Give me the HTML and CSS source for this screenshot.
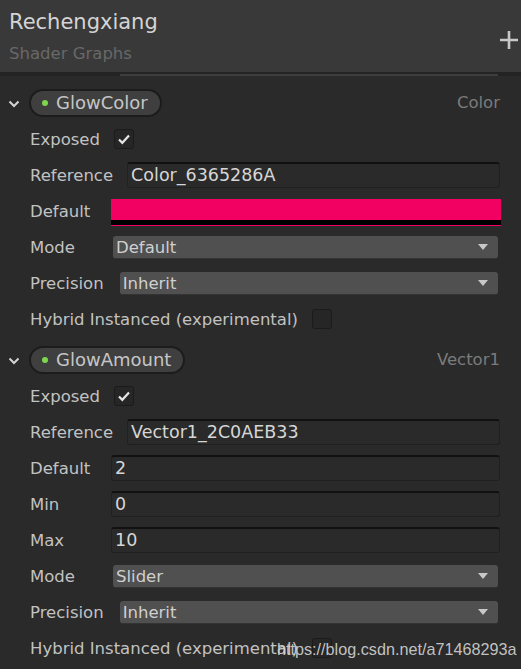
FILE: index.html
```html
<!DOCTYPE html>
<html>
<head>
<meta charset="utf-8">
<link rel="stylesheet" href="styles.css">
</head>
<body>
<div class="panel">
  <header class="head">
    <div class="titles">
      <div class="title">Rechengxiang</div>
      <div class="subtitle">Shader Graphs</div>
    </div>
    <svg class="plus" width="18" height="18" viewBox="0 0 18 18"><path d="M9 0V18M0 9H18" stroke="#c9c9c9" stroke-width="2.6"/></svg>
  </header>
  <div class="scrollbar"><div class="scroll-line"></div></div>

  <div class="content">
    <section class="section">
      <div class="sec-head">
        <svg class="chev" width="12" height="8" viewBox="0 0 12 8"><path d="M1.5 1.5L6 6L10.5 1.5" fill="none" stroke="#d4d4d4" stroke-width="2"/></svg>
        <div class="pill"><span class="dot"></span>GlowColor</div>
        <div class="type">Color</div>
      </div>
      <div class="row"><div class="label">Exposed</div><div class="check"><svg width="14" height="12" viewBox="0 0 14 12"><path d="M2 6.5L5.3 9.8L12 2.5" fill="none" stroke="#e6e6e6" stroke-width="2.2"/></svg></div></div>
      <div class="row"><div class="label">Reference</div><div class="field">Color_6365286A</div></div>
      <div class="row"><div class="label">Default</div><div class="swatch"><div class="swatch-color"></div><div class="swatch-alpha"></div></div></div>
      <div class="row"><div class="label">Mode</div><div class="drop">Default<span class="arrow"></span></div></div>
      <div class="row"><div class="label">Precision</div><div class="drop">Inherit<span class="arrow"></span></div></div>
      <div class="row"><div class="label">Hybrid Instanced (experimental)</div><div class="check"></div></div>
    </section>

    <section class="section second">
      <div class="sec-head">
        <svg class="chev" width="12" height="8" viewBox="0 0 12 8"><path d="M1.5 1.5L6 6L10.5 1.5" fill="none" stroke="#d4d4d4" stroke-width="2"/></svg>
        <div class="pill"><span class="dot"></span>GlowAmount</div>
        <div class="type">Vector1</div>
      </div>
      <div class="row"><div class="label">Exposed</div><div class="check"><svg width="14" height="12" viewBox="0 0 14 12"><path d="M2 6.5L5.3 9.8L12 2.5" fill="none" stroke="#e6e6e6" stroke-width="2.2"/></svg></div></div>
      <div class="row"><div class="label">Reference</div><div class="field">Vector1_2C0AEB33</div></div>
      <div class="row"><div class="label">Default</div><div class="field">2</div></div>
      <div class="row"><div class="label">Min</div><div class="field">0</div></div>
      <div class="row"><div class="label">Max</div><div class="field">10</div></div>
      <div class="row"><div class="label">Mode</div><div class="drop">Slider<span class="arrow"></span></div></div>
      <div class="row"><div class="label">Precision</div><div class="drop">Inherit<span class="arrow"></span></div></div>
      <div class="row"><div class="label">Hybrid Instanced (experimental)</div><div class="check"></div></div>
    </section>
  </div>
  <div class="watermark">https://blog.csdn.net/a71468293a</div>
</div>
</body>
</html>
```

FILE: styles.css
```css
* { box-sizing: border-box; }
html, body { margin: 0; padding: 0; }
body {
  background: #2a2a2a;
  font-family: "DejaVu Sans", Verdana, sans-serif;
  color: #c4c4c4;
  width: 521px;
  height: 669px;
  overflow: hidden;
}
.panel { position: relative; height: 669px; }
.head {
  height: 72px;
  background: #393939;
  display: flex;
  justify-content: space-between;
  padding: 9px 3px 0 9px;
}
.title { font-size: 21px; line-height: 26px; color: #d4d4d4; }
.subtitle { font-size: 16.5px; line-height: 20px; color: #686868; margin-top: 9px; }
.plus { margin-top: 22px; }
.scrollbar { height: 4px; background: #232323; padding-left: 120px; padding-top: 2px; }
.scroll-line { width: 378px; height: 2px; background: #3e3e3e; }
.content { padding-top: 8px; }
.section.second { margin-top: 4px; }
.sec-head {
  height: 37px;
  display: flex;
  align-items: center;
  padding: 0 21px 0 8px;
}
.chev { margin-right: 9px; margin-top: 2px; }
.pill {
  height: 28px;
  border-radius: 14px;
  background: #3f3f3f;
  border: 2px solid #1c1c1c;
  display: flex;
  align-items: center;
  padding: 0 12px 0 11px;
  font-size: 18px;
  color: #c6c6c6;
}
.dot {
  width: 6px; height: 6px;
  border-radius: 50%;
  background: #7fd64c;
  margin-right: 8px;
}
.type { margin-left: auto; font-size: 16.5px; color: #7b7b7b; }
.row {
  height: 36px;
  display: flex;
  align-items: center;
  padding: 0 21px 0 30px;
}
.label {
  min-width: 81px;
  padding-right: 14px;
  font-size: 16.5px;
  color: #c2c2c2;
  white-space: nowrap;
}
.check {
  width: 20px; height: 20px;
  border-radius: 3px;
  background: #262626;
  border: 1px solid #1b1b1b;
  display: flex;
  align-items: center;
  justify-content: center;
}
.field {
  flex: 1;
  height: 26px;
  border-radius: 3px;
  background: #2a2a2a;
  border: 1px solid #202020;
  border-top: 2px solid #111;
  padding-left: 3px;
  font-size: 17.5px;
  line-height: 22px;
  color: #d6d6d6;
}
.swatch { flex: 1; margin-right: -1px; margin-top: 2px; }
.swatch-color { height: 21px; background: #f20062; }
.swatch-alpha { height: 6px; background: #000; border-bottom: 1px solid #f20062; }
.drop {
  flex: 1;
  height: 23px;
  margin: 0 2px 0 2px;
  border-radius: 3px;
  background: #505050;
  border-bottom: 1px solid #333;
  display: flex;
  align-items: center;
  padding-left: 3px;
  padding-top: 1px;
  font-size: 16.5px;
  color: #cfcfcf;
}
.arrow {
  margin-left: auto;
  margin-right: 10px;
  width: 0; height: 0;
  border-left: 5px solid transparent;
  border-right: 5px solid transparent;
  border-top: 6px solid #c8c8c8;
}
.watermark {
  position: absolute;
  left: 277px;
  top: 640px;
  font-family: "Liberation Sans", Arial, sans-serif;
  font-size: 16.2px;
  color: rgba(214, 214, 214, 0.9);
}
```
